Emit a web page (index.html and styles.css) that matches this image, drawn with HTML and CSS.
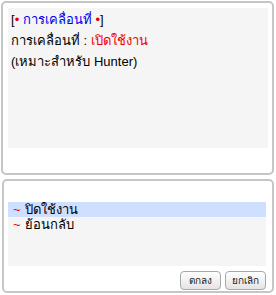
FILE: index.html
```html
<!DOCTYPE html>
<html>
<head>
<meta charset="utf-8">
<link rel="stylesheet" href="styles.css">
</head>
<body>
<div class="panel top">
  <div class="box info">
    <div class="line">[<span class="dot">•</span> <span class="blue">การเคลื่อนที่</span> <span class="dot">•</span>]</div>
    <div class="line">การเคลื่อนที่ : <span class="red">เปิดใช้งาน</span></div>
    <div class="line">(เหมาะสำหรับ Hunter)</div>
  </div>
</div>
<div class="panel bottom">
  <div class="box list">
    <div class="item selected"><span class="tilde">~</span>ปิดใช้งาน</div>
    <div class="item"><span class="tilde">~</span>ย้อนกลับ</div>
  </div>
  <div class="buttons">
    <button class="btn">ตกลง</button>
    <button class="btn">ยกเลิก</button>
  </div>
</div>
</body>
</html>
```
FILE: styles.css
```css
html, body {
  margin: 0;
  padding: 0;
  background: #ffffff;
}
body {
  width: 276px;
  height: 295px;
  font-family: "Liberation Sans", "Noto Sans", sans-serif;
  font-size: 13px;
  color: #000;
  overflow: hidden;
}
.panel {
  box-sizing: border-box;
  border: 2px solid #c6c6c6;
  border-radius: 5px;
  background: #fff;
}
.top {
  margin: 1px 2px 0 1px;
  height: 174px;
  padding: 5px 4px 0 5px;
}
.box {
  background: #f5f5f5;
}
.info {
  height: 140px;
  padding: 1px 0 0 3px;
  box-sizing: border-box;
}
.line {
  height: 21px;
  line-height: 21px;
  white-space: nowrap;
}
.dot {
  color: #e00000;
}
.blue {
  color: #0000ee;
}
.red {
  color: #ee0000;
}
.bottom {
  margin: 4px 2px 0 2px;
  height: 114px;
  padding: 21px 6px 0 4px;
}
.list {
  height: 64px;
}
.item {
  height: 15px;
  line-height: 15px;
  padding-left: 5px;
  white-space: nowrap;
}
.item.selected {
  background: #cfdfff;
}
.tilde {
  color: #e00000;
  display: inline-block;
  width: 12px;
}
.buttons {
  display: flex;
  justify-content: flex-end;
  gap: 4px;
  margin-top: 5px;
}
.btn {
  width: 41px;
  height: 19px;
  padding: 0;
  border: 1px solid #a8a8a8;
  border-radius: 4px;
  background: linear-gradient(#ffffff, #e4e4e4);
  font-family: "DejaVu Sans", sans-serif;
  font-size: 10px;
  color: #222;
}
```
